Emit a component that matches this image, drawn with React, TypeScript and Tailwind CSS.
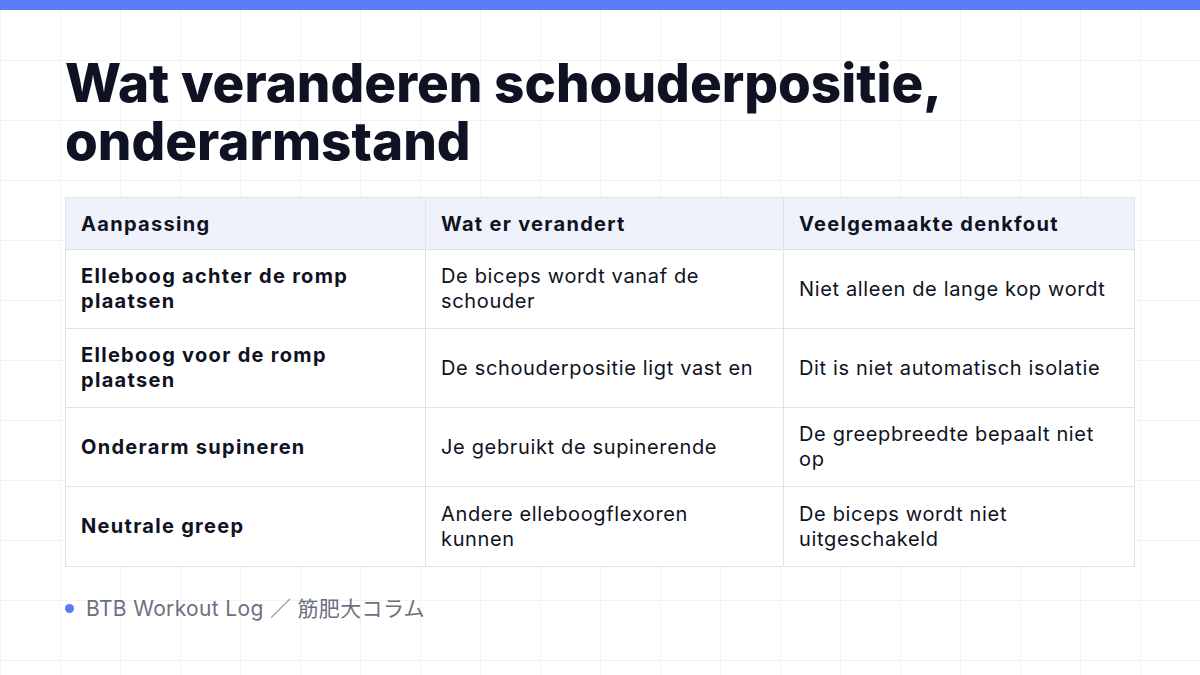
import React from "react";

const rows = [
  ["Elleboog achter de romp plaatsen", "De biceps wordt vanaf de schouder", "Niet alleen de lange kop wordt"],
  ["Elleboog voor de romp plaatsen", "De schouderpositie ligt vast en", "Dit is niet automatisch isolatie"],
  ["Onderarm supineren", "Je gebruikt de supinerende", "De greepbreedte bepaalt niet op"],
  ["Neutrale greep", "Andere elleboogflexoren kunnen", "De biceps wordt niet uitgeschakeld"],
];

export default function App() {
  return (
    <div
      className="w-[1200px] h-[675px] bg-white relative overflow-hidden text-[#0f1222]"
      style={{
        fontFamily: '"Inter", "Noto Sans CJK JP", sans-serif',
        backgroundImage:
          "linear-gradient(to right, #f2f3f7 1px, transparent 1px), linear-gradient(to bottom, #f2f3f7 1px, transparent 1px)",
        backgroundSize: "60px 60px",
      }}
    >
      <div className="h-[10px] bg-[#5b7cf6]" />

      <div className="px-[65px] pt-[44px]">
        <h1 className="text-[53px] leading-[58px] font-extrabold">
          Wat veranderen schouderpositie,
          <br />
          onderarmstand
        </h1>

        {/* Table */}
        <div className="mt-[27px] border border-[#dfe3f0] bg-white">
          <div className="grid grid-cols-[360px_358px_1fr] h-[52px] bg-[#eff2fb] border-b border-[#dfe3f0]">
            {["Aanpassing", "Wat er verandert", "Veelgemaakte denkfout"].map((h, i) => (
              <div
                key={h}
                className={`flex items-center px-[15px] text-[20px] font-bold tracking-[1.3px] ${i < 2 ? "border-r border-[#dfe3f0]" : ""}`}
              >
                {h}
              </div>
            ))}
          </div>
          {rows.map((r, ri) => (
            <div
              key={ri}
              className={`grid grid-cols-[360px_358px_1fr] h-[79px] ${ri < rows.length - 1 ? "border-b border-[#dfe3f0]" : ""}`}
            >
              {r.map((c, i) => (
                <div
                  key={i}
                  className={`flex items-center pl-[15px] pr-[17px] text-[20px] leading-[25px] ${i === 0 ? "font-bold tracking-[1.3px]" : "font-normal tracking-[0.65px]"} ${i < 2 ? "border-r border-[#dfe3f0]" : ""}`}
                >
                  <span>{c}</span>
                </div>
              ))}
            </div>
          ))}
        </div>

        {/* Footer */}
        <div className="mt-[26px] flex items-center gap-[12px] text-[21px] tracking-[0.35px] text-[#6b7080]">
          <span className="w-[9px] h-[9px] rounded-full bg-[#5b7cf6]" />
          <span>BTB Workout Log ／ 筋肥大コラム</span>
        </div>
      </div>
    </div>
  );
}
